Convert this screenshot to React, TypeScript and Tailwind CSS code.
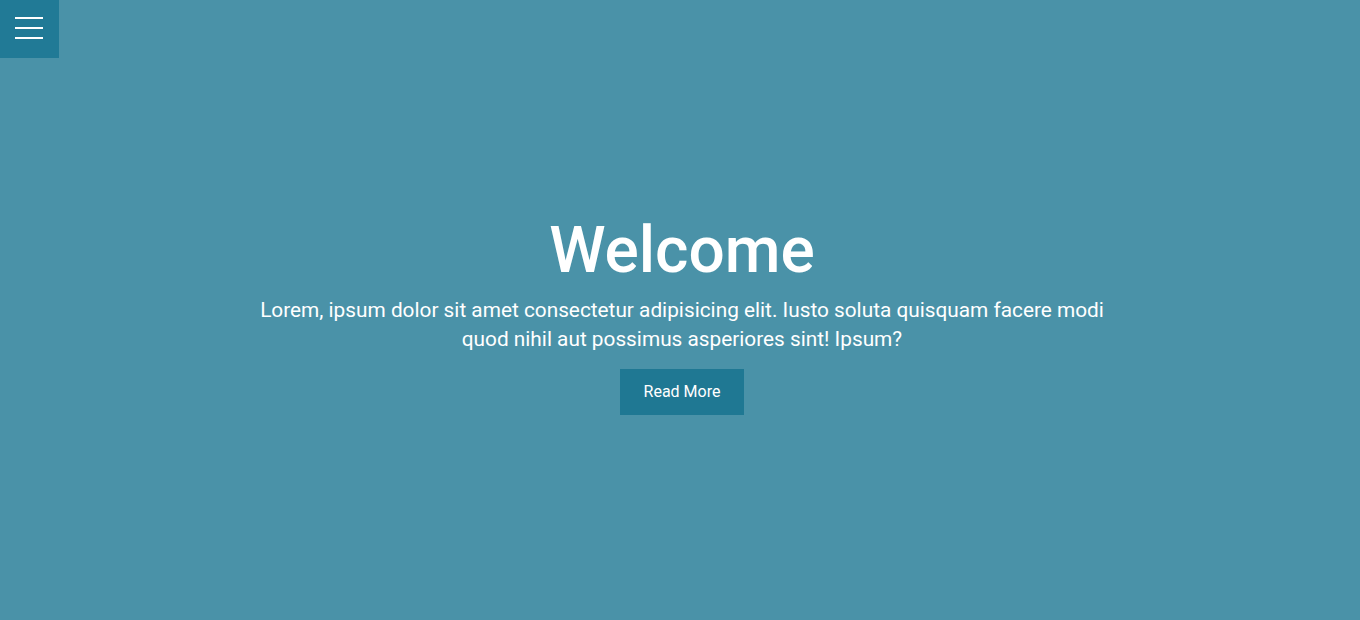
import React from "react";

export default function App() {
  return (
    <div className="relative h-[620px] w-full bg-[#4a92a8] font-['Roboto',sans-serif] text-white">
      <button className="absolute left-0 top-0 flex h-[58px] w-[59px] flex-col items-start gap-[8px] bg-[#217a96] pl-[15px] pt-[17px]">
        <span className="block h-[2px] w-[28px] bg-white" />
        <span className="block h-[2px] w-[28px] bg-white" />
        <span className="block h-[2px] w-[28px] bg-white" />
      </button>
      <div className="flex h-full flex-col items-center justify-center pl-[4px] pt-[6px]">
        <h1 className="text-[64px] font-medium leading-[77px]">Welcome</h1>
        <p className="mt-[7px] w-[870px] text-center text-[20.8px] leading-[29px]">
          Lorem, ipsum dolor sit amet consectetur adipisicing elit. Iusto soluta quisquam facere modi quod nihil aut possimus asperiores sint! Ipsum?
        </p>
        <button className="mt-[15px] h-[46px] w-[124px] bg-[#1f7893] text-[16px] text-white">
          Read More
        </button>
      </div>
    </div>
  );
}
